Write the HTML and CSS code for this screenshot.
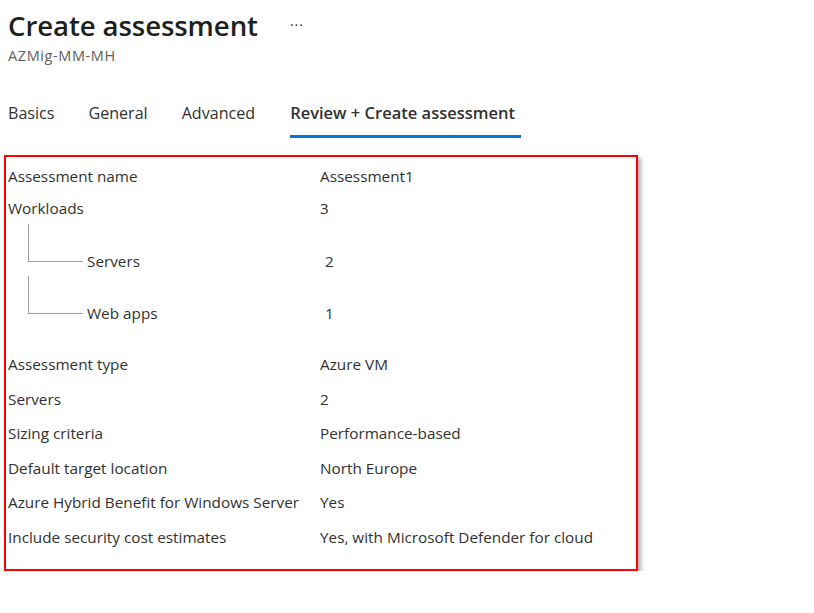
FILE: index.html
```html
<!DOCTYPE html>
<html>
<head>
<meta charset="utf-8">
<link rel="stylesheet" href="styles.css">
</head>
<body>
<div class="page">
  <header class="header">
    <div class="title-row">
      <h1 class="title">Create assessment</h1>
      <span class="more">···</span>
    </div>
    <div class="subtitle">AZMig-MM-MH</div>
  </header>
  <nav class="tabs">
    <span class="tab">Basics</span>
    <span class="tab">General</span>
    <span class="tab">Advanced</span>
    <span class="tab active">Review + Create assessment</span>
  </nav>
  <section class="summary">
    <div class="row first"><span class="label">Assessment name</span><span class="value">Assessment1</span></div>
    <div class="row first"><span class="label">Workloads</span><span class="value">3</span></div>
    <div class="row child"><span class="label"><span class="connector"></span><span>Servers</span></span><span class="value">2</span></div>
    <div class="row child"><span class="label"><span class="connector"></span><span>Web apps</span></span><span class="value">1</span></div>
    <div class="row spaced"><span class="label">Assessment type</span><span class="value">Azure VM</span></div>
    <div class="row"><span class="label">Servers</span><span class="value">2</span></div>
    <div class="row"><span class="label">Sizing criteria</span><span class="value">Performance-based</span></div>
    <div class="row"><span class="label">Default target location</span><span class="value">North Europe</span></div>
    <div class="row"><span class="label">Azure Hybrid Benefit for Windows Server</span><span class="value">Yes</span></div>
    <div class="row"><span class="label">Include security cost estimates</span><span class="value">Yes, with Microsoft Defender for cloud</span></div>
  </section>
</div>
</body>
</html>
```

FILE: styles.css
```css
* { box-sizing: border-box; }
html, body { margin: 0; padding: 0; background: #ffffff; }
body {
  font-family: "Open Sans", "Noto Sans", "Liberation Sans", sans-serif;
  color: #323130;
}
.page { padding: 0 0 0 8px; width: 814px; }
.header { padding-top: 5px; }
.title-row { display: flex; align-items: center; height: 40px; }
.title {
  margin: 0;
  font-size: 27.6px;
  font-weight: 600;
  color: #201f1e;
  letter-spacing: -0.1px;
  line-height: 40px;
}
.more { margin-left: 32px; font-size: 14px; color: #323130; letter-spacing: 1px; line-height: 40px; }
.subtitle { font-size: 14.5px; color: #605e5c; line-height: 18px; margin-top: 2px; letter-spacing: 0.6px; }
.tabs { display: flex; margin-top: 36px; height: 36px; }
.tab {
  font-size: 16.1px;
  color: #323130;
  line-height: 24px;
  margin-right: 34px;
  height: 36px;
}
.tab:nth-child(3) { margin-right: 35px; }
.tab.active {
  font-size: 16.5px;
  font-weight: 600;
  border-bottom: 3px solid #0078d4;
  padding-right: 6px;
  height: 37px;
}
.summary {
  margin-top: 18px;
  margin-left: -4px;
  width: 634px;
  height: 416px;
  border: 2px solid #ff0000;
  box-shadow: 3px 3px 4px rgba(0,0,0,0.3);
  padding: 3px 0 0 2px;
  font-size: 15.3px;
}
.row { display: grid; grid-template-columns: 312px 1fr; align-items: center; height: 34.5px; line-height: 20px; }
.row.first { height: 32px; }
.row.child { height: 52px; align-items: end; padding-bottom: 5px; }
.row.spaced { margin-top: 19px; }
.label { display: flex; align-items: flex-end; }
.connector {
  display: block;
  width: 55px;
  height: 38px;
  margin-left: 20px;
  margin-right: 4px;
  margin-bottom: 9px;
  border-left: 1px solid #a19f9d;
  border-bottom: 1px solid #a19f9d;
}
.row.child .value { padding-left: 5px; }
```
